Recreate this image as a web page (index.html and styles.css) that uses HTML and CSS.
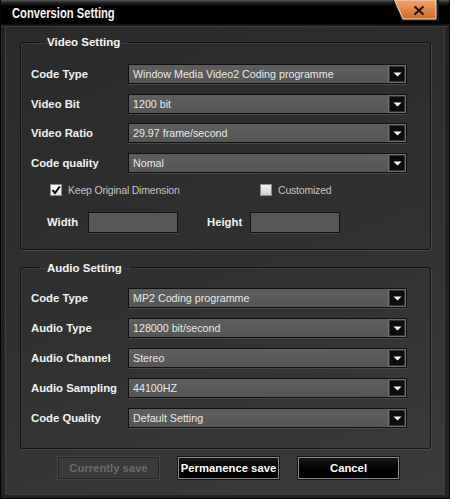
FILE: index.html
```html
<!DOCTYPE html>
<html>
<head>
<meta charset="utf-8">
<link rel="stylesheet" href="styles.css">
</head>
<body>
<div class="window">
  <div class="titlebar">
    <span class="title">Conversion Setting</span>
    <svg class="close" width="46" height="21" viewBox="0 0 46 21">
      <defs>
        <linearGradient id="og" x1="0" y1="0" x2="0" y2="1">
          <stop offset="0" stop-color="#f2a468"/>
          <stop offset="1" stop-color="#cf6a2a"/>
        </linearGradient>
      </defs>
      <polygon points="0,0 46,0 46,21 9,21" fill="#1a1a1a"/>
      <polygon points="1.5,0 43,0 43,19 10,19" fill="url(#og)" stroke="#f6dcc4" stroke-width="1"/>
      <line x1="21.5" y1="6.5" x2="30.5" y2="14.5" stroke="#1a1008" stroke-width="2"/>
      <line x1="30.5" y1="6.5" x2="21.5" y2="14.5" stroke="#1a1008" stroke-width="2"/>
    </svg>
  </div>
  <div class="frame">
    <div class="panel">
      <fieldset class="group video">
        <legend>Video Setting</legend>
        <div class="rows">
          <label class="lbl">Code Type</label>
          <div class="select"><span>Window Media Video2 Coding programme</span><i class="arrow"><svg width="9" height="5" viewBox="0 0 9 5"><polygon points="0.5,0.5 8.5,0.5 4.5,4.5" fill="#fff"/></svg></i></div>
          <label class="lbl">Video Bit</label>
          <div class="select"><span>1200 bit</span><i class="arrow"><svg width="9" height="5" viewBox="0 0 9 5"><polygon points="0.5,0.5 8.5,0.5 4.5,4.5" fill="#fff"/></svg></i></div>
          <label class="lbl">Video Ratio</label>
          <div class="select"><span>29.97 frame/second</span><i class="arrow"><svg width="9" height="5" viewBox="0 0 9 5"><polygon points="0.5,0.5 8.5,0.5 4.5,4.5" fill="#fff"/></svg></i></div>
          <label class="lbl">Code quality</label>
          <div class="select"><span>Nomal</span><i class="arrow"><svg width="9" height="5" viewBox="0 0 9 5"><polygon points="0.5,0.5 8.5,0.5 4.5,4.5" fill="#fff"/></svg></i></div>
        </div>
        <div class="checks">
          <label class="check keep"><span class="box checked"><svg width="10" height="10" viewBox="0 0 10 10"><path d="M1.5 5.2 L4 8 L8.8 1.5" fill="none" stroke="#000" stroke-width="2"/></svg></span>Keep Original Dimension</label>
          <label class="check"><span class="box"></span>Customized</label>
        </div>
        <div class="dims">
          <label class="lbl dim-w">Width</label>
          <div class="input"></div>
          <label class="lbl dim-h">Height</label>
          <div class="input"></div>
        </div>
      </fieldset>
      <fieldset class="group audio">
        <legend>Audio Setting</legend>
        <div class="rows">
          <label class="lbl">Code Type</label>
          <div class="select"><span>MP2 Coding programme</span><i class="arrow"><svg width="9" height="5" viewBox="0 0 9 5"><polygon points="0.5,0.5 8.5,0.5 4.5,4.5" fill="#fff"/></svg></i></div>
          <label class="lbl">Audio Type</label>
          <div class="select"><span>128000 bit/second</span><i class="arrow"><svg width="9" height="5" viewBox="0 0 9 5"><polygon points="0.5,0.5 8.5,0.5 4.5,4.5" fill="#fff"/></svg></i></div>
          <label class="lbl">Audio Channel</label>
          <div class="select"><span>Stereo</span><i class="arrow"><svg width="9" height="5" viewBox="0 0 9 5"><polygon points="0.5,0.5 8.5,0.5 4.5,4.5" fill="#fff"/></svg></i></div>
          <label class="lbl">Audio Sampling</label>
          <div class="select"><span>44100HZ</span><i class="arrow"><svg width="9" height="5" viewBox="0 0 9 5"><polygon points="0.5,0.5 8.5,0.5 4.5,4.5" fill="#fff"/></svg></i></div>
          <label class="lbl">Code Quality</label>
          <div class="select"><span>Default Setting</span><i class="arrow"><svg width="9" height="5" viewBox="0 0 9 5"><polygon points="0.5,0.5 8.5,0.5 4.5,4.5" fill="#fff"/></svg></i></div>
        </div>
      </fieldset>
      <div class="buttons">
        <button class="btn disabled">Currently save</button>
        <button class="btn">Permanence save</button>
        <button class="btn">Cancel</button>
      </div>
    </div>
  </div>
</div>
</body>
</html>
```
FILE: styles.css
```css
* { box-sizing: border-box; }
html, body { margin: 0; padding: 0; background: #000; }
body { font-family: "Liberation Sans", Arial, sans-serif; }

.window {
  width: 450px;
  height: 499px;
  background: #1f1f1f;
  border-left: 1px solid #050505;
  border-right: 1px solid #050505;
  border-bottom: 1px solid #050505;
  display: flex;
  flex-direction: column;
}

.titlebar {
  height: 27px;
  display: flex;
  justify-content: space-between;
  align-items: flex-start;
  padding: 0 10px 0 11px;
  background: linear-gradient(#5a5a5a 0, #2a2a2a 2px, #0a0a0a 5px, #000 8px, #000 24px, #1a1a1a 25px);
  border-bottom: 1px solid #3e3e3e;
}
.title {
  font-family: "Liberation Sans", Arial, sans-serif;
  font-weight: bold;
  font-size: 14px;
  color: #f4f4f4;
  line-height: 14px;
  margin-top: 6px;
  white-space: nowrap;
  transform: scaleX(0.8);
  transform-origin: left center;
}
.close { display: block; }

.frame {
  flex: 1;
  padding: 0 4px 3px 4px;
  background: #232323;
}

.panel {
  height: 100%;
  border-left: 1px solid #414141;
  border-right: 1px solid #3a3a3a;
  border-bottom: 1px solid #3a3a3a;
  background: linear-gradient(160deg, #2a2a2a 0%, #303030 50%, #3b3b3b 100%);
  padding: 8px 13px 0 14px;
}

.group {
  margin: 0;
  border: 1px solid #141414;
  border-radius: 3px;
  box-shadow: 1px 1px 0 #474747, inset 1px 1px 0 #3a3a3a;
  padding: 15px 22px 16px 10px;
  min-width: 0;
}
.group legend {
  font-weight: bold;
  font-size: 11.5px;
  line-height: 14px;
  color: #f4f4f4;
  padding: 0 8px;
  margin-left: 8px;
}
.audio {
  margin-top: 11px;
  padding-top: 13px;
  padding-bottom: 20px;
}

.rows {
  display: grid;
  grid-template-columns: 97px 279px;
  row-gap: 9.5px;
  align-items: center;
}
.audio .rows { row-gap: 10px; }

.lbl {
  font-weight: bold;
  font-size: 11.3px;
  color: #f2f2f2;
  white-space: nowrap;
}

.select {
  height: 20px;
  display: flex;
  align-items: center;
  justify-content: space-between;
  background: linear-gradient(#5e5e5e, #555);
  border: 1px solid #101010;
  box-shadow: 0 1px 0 #474747;
  padding: 0 0 0 4px;
  font-size: 10.7px;
  color: #e8e8e8;
}
.arrow {
  width: 18px;
  height: 18px;
  border: 1px solid #707070;
  background: #0c0c0c;
  box-shadow: inset 0 0 0 1px #333;
  display: flex;
  align-items: center;
  justify-content: center;
}
.arrow svg { display: block; margin-top: 1px; }

.checks {
  display: flex;
  margin: 11px 0 0 19px;
  height: 12px;
  align-items: center;
}
.check {
  display: flex;
  align-items: center;
  font-size: 10.5px;
  letter-spacing: -0.2px;
  color: #c4c4c4;
}
.keep { width: 210px; }
.box {
  width: 12px;
  height: 12px;
  margin-right: 6px;
  border: 1px solid #8a8a8a;
  background: linear-gradient(#f2f2f2, #cfcfcf);
  display: flex;
  align-items: center;
  justify-content: center;
}
.box.checked { background: linear-gradient(#fff, #e4e4e4); }
.box svg { display: block; }

.dims {
  display: flex;
  align-items: center;
  margin: 16px 0 0 16px;
}
.dim-w { width: 41px; }
.dim-h { width: 43px; margin-left: 29px; }
.input {
  width: 90px;
  height: 21px;
  background: #575757;
  border: 1px solid #111;
  box-shadow: 0 1px 0 #444;
}

.buttons {
  display: flex;
  gap: 19px;
  margin: 8px 0 0 38px;
}
.btn {
  width: 101px;
  height: 22px;
  font-family: "Liberation Sans", Arial, sans-serif;
  font-weight: bold;
  font-size: 11.3px;
  color: #fff;
  background: linear-gradient(#161616, #000 60%);
  border: 1px solid #8a8a8a;
  box-shadow: 0 0 0 1px #151515;
  padding: 0;
  white-space: nowrap;
}
.btn.disabled {
  color: #6a6a6a;
  background: #3a3a3a;
  border: 1px solid #262626;
  box-shadow: 0 0 0 1px #444;
}
```
